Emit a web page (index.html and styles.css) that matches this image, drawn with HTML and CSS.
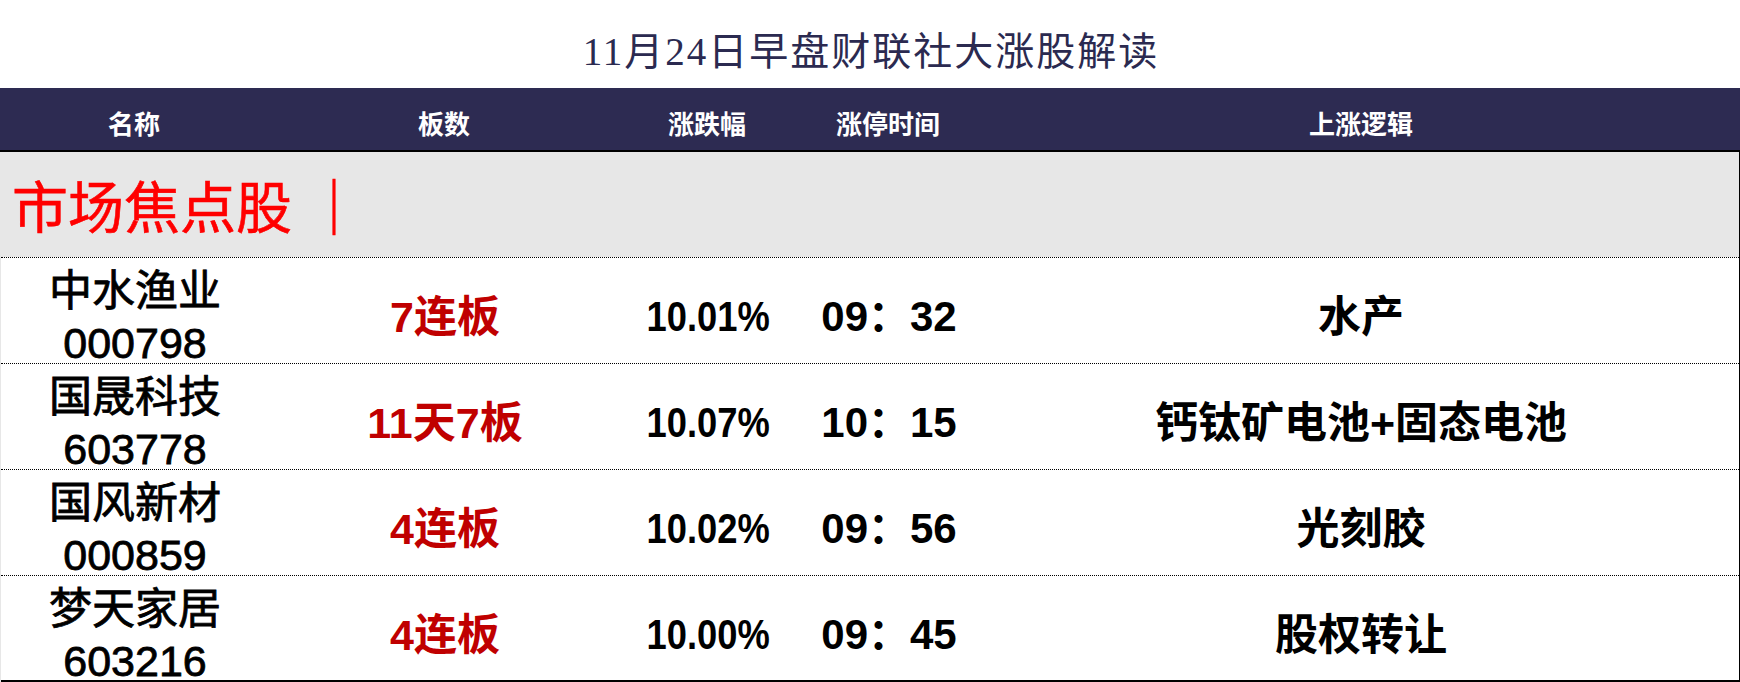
FILE: index.html
```html
<!DOCTYPE html>
<html lang="zh-CN">
<head>
<meta charset="utf-8">
<title>11月24日早盘财联社大涨股解读</title>
<link rel="stylesheet" href="styles.css">
</head>
<body>
<div class="page">
  <div class="title">11月24日早盘财联社大涨股解读</div>
  <div class="table">
    <div class="head">
      <div class="hcell">名称</div>
      <div class="hcell">板数</div>
      <div class="hcell">涨跌幅</div>
      <div class="hcell">涨停时间</div>
      <div class="hcell">上涨逻辑</div>
    </div>
    <div class="body">
      <div class="section"><span class="section-text">市场焦点股 ｜</span></div>
      <div class="row">
        <div class="cell name"><span class="cn">中水渔业</span><span class="code">000798</span></div>
        <div class="cell boards">7连板</div>
        <div class="cell pct"><span class="pct-text">10.01%</span></div>
        <div class="cell time">09：32</div>
        <div class="cell logic">水产</div>
      </div>
      <div class="row">
        <div class="cell name"><span class="cn">国晟科技</span><span class="code">603778</span></div>
        <div class="cell boards">11天7板</div>
        <div class="cell pct"><span class="pct-text">10.07%</span></div>
        <div class="cell time">10：15</div>
        <div class="cell logic">钙钛矿电池+固态电池</div>
      </div>
      <div class="row">
        <div class="cell name"><span class="cn">国风新材</span><span class="code">000859</span></div>
        <div class="cell boards">4连板</div>
        <div class="cell pct"><span class="pct-text">10.02%</span></div>
        <div class="cell time">09：56</div>
        <div class="cell logic">光刻胶</div>
      </div>
      <div class="row last">
        <div class="cell name"><span class="cn">梦天家居</span><span class="code">603216</span></div>
        <div class="cell boards">4连板</div>
        <div class="cell pct"><span class="pct-text">10.00%</span></div>
        <div class="cell time">09：45</div>
        <div class="cell logic">股权转让</div>
      </div>
    </div>
  </div>
</div>
</body>
</html>
```
FILE: styles.css
```css
* { box-sizing: border-box; }
html, body { margin: 0; padding: 0; background: #ffffff; }
body {
  font-family: "Liberation Sans", "Noto Sans CJK SC", sans-serif;
  color: #000;
  width: 1740px;
  height: 682px;
  overflow: hidden;
}
.page { width: 1740px; }
.title {
  height: 88px;
  padding-top: 8px;
  padding-left: 2px;
  display: flex;
  align-items: center;
  justify-content: center;
  font-family: "Liberation Serif", "Noto Sans CJK SC", serif;
  font-size: 39px;
  letter-spacing: 2px;
  color: #2b2a50;
}
.head, .row {
  display: grid;
  grid-template-columns: 268px 352px 174px 188px 1fr;
}
.head {
  height: 64px;
  background: #2d2b52;
  border-bottom: 2px solid #000;
  padding-top: 6px;
}
.hcell {
  display: flex;
  align-items: center;
  justify-content: center;
  color: #fff;
  font-family: "Noto Sans CJK SC", sans-serif;
  font-weight: bold;
  font-size: 26px;
}
.body {
  border-right: 1px solid #000;
  border-left: 1px solid #e7e7e7;
}
.section {
  height: 105px;
  background: #e7e7e7;
  display: flex;
  align-items: center;
  padding-left: 11px;
  padding-top: 8px;
}
.section-text {
  font-family: "Liberation Serif", "Noto Sans CJK SC", serif;
  color: #ff0000;
  font-size: 56px;
  line-height: 1;
  -webkit-text-stroke: 0.6px #ff0000;
}
.row {
  height: 106px;
  border-top: 1px dotted #000;
  padding-top: 7px;
}
.row.last {
  height: 107px;
  border-bottom: 2px solid #000;
}
.cell {
  display: flex;
  align-items: center;
  justify-content: center;
  font-size: 43px;
  line-height: 1;
}
.name {
  flex-direction: column;
  font-weight: normal;
  -webkit-text-stroke: 0.8px #000;
}
.name .cn, .name .code {
  display: block;
  line-height: 52px;
}
.boards {
  color: #c00000;
  font-weight: bold;
}
.pct, .time {
  font-weight: bold;
  font-size: 42px;
}
.pct-text {
  display: inline-block;
  transform: scaleX(0.865);
}
.logic {
  font-weight: bold;
}
```
